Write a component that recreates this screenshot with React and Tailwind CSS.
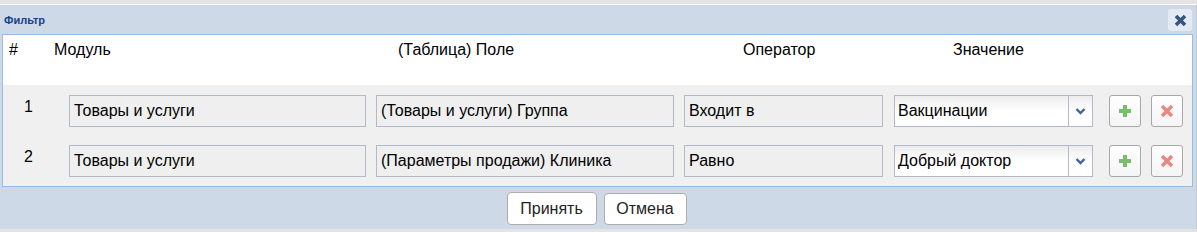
import React from "react";

const font = { fontFamily: '"Liberation Sans", Arial, sans-serif' };

function Field({ w, children }) {
  return (
    <div
      className={`${w} h-[32px] border border-[#b5b8c8] bg-[#efefef] flex items-center pl-[4px] text-[16px] text-black shrink-0 whitespace-nowrap overflow-hidden`}
    >
      {children}
    </div>
  );
}

function Select({ children }) {
  return (
    <div className="w-[199px] h-[32px] border border-[#b5b8c8] bg-gradient-to-b from-[#ececec] via-white to-white flex shrink-0">
      <div className="flex-1 flex items-center pl-[3px] text-[16px] text-black whitespace-nowrap">{children}</div>
      <div className="w-[24px] border-l border-[#b5b8c8] flex items-center justify-center">
        <svg width="11" height="8" viewBox="0 0 11 8">
          <path d="M1.5 2 L5.5 6 L9.5 2" fill="none" stroke="#3d64a0" strokeWidth="2.4" />
        </svg>
      </div>
    </div>
  );
}

function IconBtn({ kind }) {
  return (
    <div className="w-[32px] h-[32px] border border-[#a8a8a8] rounded-[3px] bg-gradient-to-b from-white to-[#f4f4f4] flex items-center justify-center shrink-0">
      {kind === "plus" ? (
        <svg width="14" height="14" viewBox="0 0 14 14">
          <path d="M7 1 V13 M1 7 H13" stroke="#79bf6b" strokeWidth="4" />
        </svg>
      ) : (
        <svg width="14" height="14" viewBox="0 0 14 14">
          <path d="M2 2 L12 12 M12 2 L2 12" stroke="#ec8585" strokeWidth="3.4" />
        </svg>
      )}
    </div>
  );
}

function Row({ n, mod, field, op, val }) {
  return (
    <div className="flex h-[32px]">
      <div className="w-[66px] shrink-0 pl-[21px] pt-[3px] text-[16px] text-black leading-[18px]">{n}</div>
      <Field w="w-[297px]">{mod}</Field>
      <div className="w-[10px] shrink-0" />
      <Field w="w-[298px]">{field}</Field>
      <div className="w-[10px] shrink-0" />
      <Field w="w-[199px]">{op}</Field>
      <div className="w-[11px] shrink-0" />
      <Select>{val}</Select>
      <div className="w-[16px] shrink-0" />
      <IconBtn kind="plus" />
      <div className="w-[10px] shrink-0" />
      <IconBtn kind="x" />
    </div>
  );
}

export default function App() {
  return (
    <div style={font} className="w-[1197px] h-[232px] bg-[#e4e4e4] pt-[4px] overflow-hidden">
      <div className="h-[225px] border-t border-r border-[#c4c9d0] border-t-white bg-[#cdd9e7] flex flex-col">
        {/* title bar */}
        <div className="h-[29px] flex items-center justify-between pl-[4px] pr-[4px]">
          <span className="text-[11px] font-bold text-[#15428b] mt-[1px]">Фильтр</span>
          <div className="w-[24px] h-[22px] rounded-[3px] bg-[#e3eaf3] flex items-center justify-center mt-[1px]">
            <svg width="13" height="13" viewBox="0 0 13 13">
              <path d="M2 2 L11 11 M11 2 L2 11" stroke="#35577f" strokeWidth="3.6" />
            </svg>
          </div>
        </div>
        {/* panel */}
        <div className="ml-[2px] w-[1191px] h-[153px] border border-[#99bbe8] flex flex-col">
          <div className="h-[50px] bg-white flex text-[16px] text-black pt-[5px] leading-[20px]">
            <div className="w-[51px] pl-[6px] shrink-0">#</div>
            <div className="w-[344px] shrink-0">Модуль</div>
            <div className="w-[345px] shrink-0">(Таблица) Поле</div>
            <div className="w-[210px] shrink-0">Оператор</div>
            <div>Значение</div>
          </div>
          <div className="flex-1 bg-[#f0f0f0] pt-[10px] flex flex-col gap-[18px]">
            <Row n="1" mod="Товары и услуги" field="(Товары и услуги) Группа" op="Входит в" val="Вакцинации" />
            <Row n="2" mod="Товары и услуги" field="(Параметры продажи) Клиника" op="Равно" val="Добрый доктор" />
          </div>
        </div>
        {/* footer */}
        <div className="flex justify-center gap-[7px] pt-[5px] pr-[3px]">
          <button className="w-[90px] h-[33px] rounded-[4px] border border-[#adadad] bg-white text-[16px] text-[#222]">
            Принять
          </button>
          <button className="w-[83px] h-[32px] mt-[1px] rounded-[4px] border border-[#adadad] bg-white text-[16px] text-[#222]">
            Отмена
          </button>
        </div>
      </div>
    </div>
  );
}
